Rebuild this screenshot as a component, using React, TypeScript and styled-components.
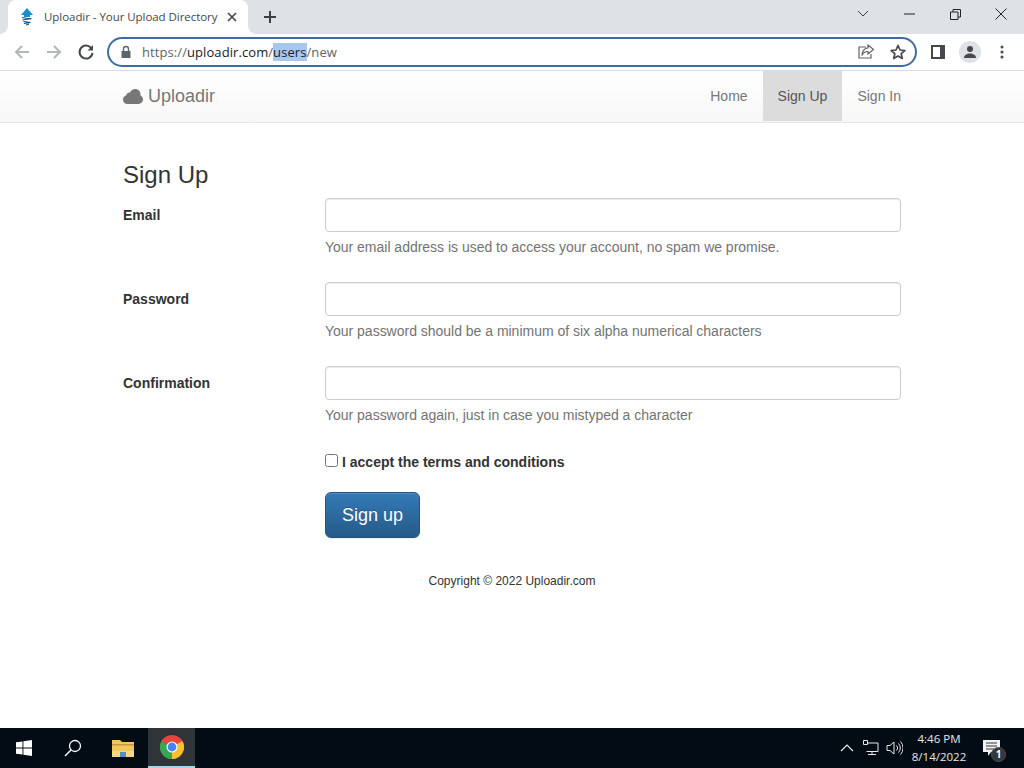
import React from "react";
import styled, { createGlobalStyle } from "styled-components";

const Global = createGlobalStyle`
  html, body { margin: 0; padding: 0; height: 100%; }
  body { font-family: "Liberation Sans", Arial, sans-serif; background: #fff; color: #333; overflow: hidden; }
  * { box-sizing: border-box; }
`;

const Page = styled.div`
  width: 1024px; height: 768px; display: flex; flex-direction: column; overflow: hidden;
`;
const TabStrip = styled.div`
  height: 34px; background: #dee1e6; display: flex; align-items: flex-end; flex: none;
`;
const Tab = styled.div`
  position: relative; width: 240px; height: 34px; margin-left: 8px; background: #fff; border-radius: 8px 8px 0 0;
  display: flex; align-items: center; padding: 0 0 0 11px; gap: 9px;
  &::before, &::after { content: ""; position: absolute; bottom: 0; width: 8px; height: 8px; }
  &::before { left: -8px; background: radial-gradient(circle at 0 0, #dee1e6 7.5px, #fff 8px); }
  &::after { right: -8px; background: radial-gradient(circle at 100% 0, #dee1e6 7.5px, #fff 8px); }
`;
const TabTitle = styled.span`
  font-family: "Open Sans", sans-serif; font-size: 11.5px; color: #45484c; white-space: nowrap; flex: 1;
  letter-spacing: -0.05px; padding-bottom: 1px;
`;
const TabClose = styled.svg`
  width: 10px; height: 10px; margin-right: 11px; flex: none;
`;
const NewTab = styled.svg`
  width: 14px; height: 14px; margin-left: 15px; margin-bottom: 10px; flex: none;
`;
const WindowControls = styled.div`
  margin-left: auto; height: 34px; display: flex; align-items: center;
`;
const WinButton = styled.div<{ $w: number }>`
  width: ${p => p.$w}px; height: 34px; display: flex; align-items: center; justify-content: center;
  padding-bottom: 6px;
`;
const Toolbar = styled.div`
  height: 37px; background: #fff; border-bottom: 1px solid #dadce0; display: flex; align-items: center;
  padding: 0 0 1px 13px; flex: none;
`;
const NavIcon = styled.svg<{ $mr: number }>`
  width: 18px; height: 18px; flex: none; margin-right: ${p => p.$mr}px;
`;
const Omnibox = styled.div`
  width: 810px; height: 30px; border: 2px solid #3f6d9d; border-radius: 15px; display: flex; align-items: center;
  padding: 0 8px 0 11px; flex: none; margin-right: 14px; margin-left: 2px;
`;
const UrlText = styled.div`
  font-family: "Open Sans", sans-serif; font-size: 13px; color: #5f6368; margin-left: 10px; flex: 1; white-space: nowrap;
  letter-spacing: 0.08px;
`;
const UrlHost = styled.span` color: #202124; `;
const UrlSelected = styled.span` background: #a8c7f0; color: #202124; `;
const OmniIcon = styled.svg`
  width: 18px; height: 18px; flex: none; margin-left: 14px;
`;
const Avatar = styled.div`
  width: 22px; height: 22px; border-radius: 50%; background: #dee1e6; margin: 0 19px 0 14px; display: flex;
  align-items: center; justify-content: center; flex: none;
`;

const Navbar = styled.nav`
  height: 52px; flex: none; background: linear-gradient(to bottom, #fff 0%, #f7f7f7 100%);
  border-bottom: 1px solid #e7e7e7; display: flex; justify-content: space-between; padding: 0 108px 0 123px;
`;
const Brand = styled.div`
  display: flex; align-items: center; gap: 5px; font-size: 18px; color: #777;
`;
const NavLinks = styled.div` display: flex; height: 50px; `;
const NavLink = styled.div<{ $active?: boolean }>`
  padding: 0 15px 1px; display: flex; align-items: center; font-size: 14px;
  color: ${p => (p.$active ? "#555" : "#777")};
  background: ${p => (p.$active ? "#dcdcdc" : "transparent")};
`;

const Main = styled.main`
  flex: 1; padding: 35px 123px 0; display: flex; flex-direction: column;
`;
const Heading = styled.h1`
  font-size: 24px; font-weight: 400; line-height: 33px; margin: 0 0 7px; color: #333;
`;
const Row = styled.div`
  display: grid; grid-template-columns: 202px 576px; height: 84px;
`;
const Label = styled.label`
  font-size: 14px; font-weight: 700; color: #333; padding-top: 9px; line-height: 17px;
`;
const InputBox = styled.input`
  display: block; width: 100%; height: 34px; border: 1px solid #ccc; border-radius: 4px; background: #fff;
  box-shadow: inset 0 1px 1px rgba(0,0,0,.075); outline: none;
`;
const Help = styled.div`
  font-size: 14px; line-height: 20px; color: #737373; margin-top: 5px; letter-spacing: -0.015px;
`;
const Actions = styled.div`
  margin-left: 202px; margin-top: 2px; display: flex; flex-direction: column; align-items: flex-start;
`;
const CheckLine = styled.label`
  display: flex; align-items: center; height: 20px; font-size: 14px; font-weight: 700; color: #333; gap: 4px; margin-bottom: 20px;
`;
const Check = styled.span`
  width: 13px; height: 13px; border: 1px solid #767676; border-radius: 2.5px; background: #fff; display: block; margin-bottom: 4px;
`;
const Submit = styled.button`
  width: 95px; height: 46px; border: 1px solid #245580; border-radius: 6px; font-family: inherit; font-size: 18px; color: #fff;
  background: linear-gradient(to bottom, #337ab7 0%, #265a88 100%);
  text-shadow: 0 -1px 0 rgba(0,0,0,.2); box-shadow: inset 0 1px 0 rgba(255,255,255,.15), 0 1px 1px rgba(0,0,0,.075);
`;
const Footer = styled.div`
  font-size: 12px; color: #333; text-align: center; margin: 36px 0 0 -6px; line-height: 14px; width: 790px;
`;

const Taskbar = styled.div`
  height: 40px; background: #030c14; display: flex; align-items: stretch; flex: none; color: #fff;
`;
const TaskSlot = styled.div<{ $w: number; $active?: boolean }>`
  width: ${p => p.$w}px; display: flex; align-items: center; justify-content: center; flex: none;
  background: ${p => (p.$active ? "#2e3438" : "transparent")};
  border-bottom: ${p => (p.$active ? "2px solid #9fd8e6" : "none")};
`;
const Tray = styled.div` margin-left: auto; display: flex; align-items: center; `;
const Clock = styled.div`
  width: 70px; margin-left: 1px; text-align: center; font-family: "Open Sans", sans-serif; font-size: 11.5px; line-height: 18px; color: #e8e8e8;
`;
const Notify = styled.div`
  position: relative; width: 50px; height: 40px; display: flex; align-items: center; padding-left: 9px;
`;
const Badge = styled.span`
  position: absolute; left: 17px; top: 19px; width: 15px; height: 15px; border-radius: 50%; background: #33373a;
  border: 1px solid #4a4d50; color: #fff; font-family: "Open Sans", sans-serif; font-size: 10px; font-weight: 700; line-height: 13px; text-align: center;
`;

const Favicon = () => (
  <svg width="16" height="18" viewBox="0 0 16 18" style={{ flex: "none" }}>
    <path d="M8 0 L14 7 L11 7 L11 9 L5 9 L5 7 L2 7 Z" fill="#1c8fc9" />
    <path d="M3 9.500l9 1.500M3.500 12l9-1.500M4.500 13.500l7 1M5 15.500l6-1M7 17l3-1" stroke="#0f4f78" strokeWidth="1.100" fill="none" />
  </svg>
);

const Cloud = () => (
  <svg width="20" height="15" viewBox="0 0 20 15">
    <path d="M4.500 15C2 15 0 13.100 0 10.700c0-1.900 1.200-3.500 3-4.100C3.300 4.600 5 3.200 7 3.400 8 1.400 10 0 12.200 0c2.900 0 5.200 2.200 5.300 5 .1.500.1 1 0 1.400 1.500.7 2.500 2.200 2.500 3.900C20 12.900 17.900 15 15.300 15Z" fill="#777" />
  </svg>
);

const Chrome = () => (
  <svg width="24" height="24" viewBox="0 0 24 24">
    <circle cx="12" cy="12" r="12" fill="#e8453c" />
    <path d="M12 12 L22.400 6 A12 12 0 0 1 12 24 Z" fill="#fbc02d" />
    <path d="M12 12 L12 24 A12 12 0 0 1 1.600 6 Z" fill="#34a853" />
    <path d="M12 12 L1.600 6 A12 12 0 0 1 5 2.300 L12 7Z" fill="#e8453c" />
    <circle cx="12" cy="12" r="5.500" fill="#fff" />
    <circle cx="12" cy="12" r="4.400" fill="#4285f4" />
  </svg>
);

export default function App() {
  return (
    <Page>
      <Global />
      <TabStrip>
        <Tab>
          <Favicon />
          <TabTitle>Uploadir - Your Upload Directory</TabTitle>
          <TabClose viewBox="0 0 10 10"><path d="M1 1l8 8M9 1l-8 8" stroke="#45484c" strokeWidth="1.700" /></TabClose>
        </Tab>
        <NewTab viewBox="0 0 14 14"><path d="M7 1v12M1 7h12" stroke="#3c4043" strokeWidth="2" /></NewTab>
        <WindowControls>
          <WinButton $w={46}><svg width="12" height="8" viewBox="0 0 12 8"><path d="M1 1l5 5 5-5" fill="none" stroke="#3c4043" /></svg></WinButton>
          <WinButton $w={46}><svg width="11" height="2" viewBox="0 0 11 2"><path d="M0 1h11" stroke="#222" /></svg></WinButton>
          <WinButton $w={46}><svg width="11" height="11" viewBox="0 0 11 11"><path d="M.5 3h7.500v7.500H.5zM3 3V.5h7.500V8H8" fill="none" stroke="#222" /></svg></WinButton>
          <WinButton $w={46}><svg width="12" height="12" viewBox="0 0 12 12"><path d="M.5.5l11 11M11.500.5l-11 11" stroke="#222" /></svg></WinButton>
        </WindowControls>
      </TabStrip>
      <Toolbar>
        <NavIcon $mr={14} viewBox="0 0 18 18"><path d="M16 9H3M9 3L3 9l6 6" fill="none" stroke="#b4b7bb" strokeWidth="2" /></NavIcon>
        <NavIcon $mr={14} viewBox="0 0 18 18"><path d="M2 9h13M9 3l6 6-6 6" fill="none" stroke="#b4b7bb" strokeWidth="2" /></NavIcon>
        <NavIcon $mr={10} viewBox="0 0 18 18"><path d="M14.800 6A6.500 6.500 0 1 0 15.500 10" fill="none" stroke="#45484c" strokeWidth="2" /><path d="M16 2v5.500h-5.500z" fill="#45484c" /></NavIcon>
        <Omnibox>
          <svg width="12" height="14" viewBox="0 0 12 14" style={{ flex: "none" }}>
            <path d="M1.500 6h9v7h-9z" fill="#5f6368" />
            <path d="M3.500 6V4a2.500 2.500 0 0 1 5 0v2" fill="none" stroke="#5f6368" strokeWidth="1.400" />
          </svg>
          <UrlText>https://<UrlHost>uploadir.com</UrlHost>/<UrlSelected>users</UrlSelected>/new</UrlText>
          <OmniIcon viewBox="0 0 18 18">
            <path d="M9 4H2v11h12v-4" fill="none" stroke="#5f6368" strokeWidth="1.200" />
            <path d="M11 2l5.500 4.500L11 11V8.500C8 8.500 6 10 5 12.500 5 8.500 7.500 5 11 4.800Z" fill="none" stroke="#5f6368" strokeWidth="1.200" />
          </OmniIcon>
          <OmniIcon viewBox="0 0 18 18">
            <path d="M9 2.500l2 4.500 4.900.500-3.700 3.200 1.100 4.800L9 13l-4.300 2.500 1.100-4.800L2.100 7.500 7 7Z" fill="none" stroke="#45484c" strokeWidth="1.700" strokeLinejoin="round" />
          </OmniIcon>
        </Omnibox>
        <svg width="14" height="14" viewBox="0 0 14 14" style={{ flex: "none" }}>
          <path d="M0 0h14v14H0z" fill="#45484c" />
          <path d="M2 2h7v10H2z" fill="#fff" />
        </svg>
        <Avatar>
          <svg width="14" height="14" viewBox="0 0 14 14">
            <circle cx="7" cy="4" r="3" fill="#45484c" />
            <path d="M1 13c0-3 3-4.500 6-4.500s6 1.500 6 4.500z" fill="#45484c" />
          </svg>
        </Avatar>
        <svg width="4" height="14" viewBox="0 0 4 14" style={{ flex: "none" }}>
          <circle cx="2" cy="2" r="1.500" fill="#45484c" />
          <circle cx="2" cy="7" r="1.500" fill="#45484c" />
          <circle cx="2" cy="12" r="1.500" fill="#45484c" />
        </svg>
      </Toolbar>
      <Navbar>
        <Brand><Cloud />Uploadir</Brand>
        <NavLinks>
          <NavLink>Home</NavLink>
          <NavLink $active>Sign Up</NavLink>
          <NavLink>Sign In</NavLink>
        </NavLinks>
      </Navbar>
      <Main>
        <Heading>Sign Up</Heading>
        <Row>
          <Label>Email</Label>
          <div>
            <InputBox />
            <Help>Your email address is used to access your account, no spam we promise.</Help>
          </div>
        </Row>
        <Row>
          <Label>Password</Label>
          <div>
            <InputBox type="password" />
            <Help>Your password should be a minimum of six alpha numerical characters</Help>
          </div>
        </Row>
        <Row>
          <Label>Confirmation</Label>
          <div>
            <InputBox type="password" />
            <Help>Your password again, just in case you mistyped a character</Help>
          </div>
        </Row>
        <Actions>
          <CheckLine><Check />I accept the terms and conditions</CheckLine>
          <Submit>Sign up</Submit>
        </Actions>
        <Footer>Copyright © 2022 Uploadir.com</Footer>
      </Main>
      <Taskbar>
        <TaskSlot $w={48}>
          <svg width="16" height="16" viewBox="0 0 16 16">
            <path d="M0 2.300l6.500-.9v6.200H0zM7.400 1.300L16 0v7.600H7.400zM0 8.400h6.500v6.200L0 13.700zM7.400 8.400H16V16l-8.600-1.300z" fill="#fff" />
          </svg>
        </TaskSlot>
        <TaskSlot $w={50}>
          <svg width="18" height="18" viewBox="0 0 18 18">
            <circle cx="11" cy="7" r="5.500" fill="none" stroke="#fff" strokeWidth="1.300" />
            <path d="M7 11l-6 6" stroke="#fff" strokeWidth="1.500" />
          </svg>
        </TaskSlot>
        <TaskSlot $w={50}>
          <svg width="22" height="18" viewBox="0 0 22 18">
            <path d="M0 1h8l2 2h12v15H0z" fill="#f0c75e" />
            <path d="M0 5h22v1.500H0z" fill="#c9983a" />
            <path d="M0 12h22v6H0z" fill="#f5d97f" />
            <path d="M8 13h6v5H8z" fill="#4f8fc4" />
          </svg>
        </TaskSlot>
        <TaskSlot $w={47} $active><Chrome /></TaskSlot>
        <Tray>
          <svg width="14" height="8" viewBox="0 0 14 8" style={{ marginRight: 9 }}><path d="M1 7l6-6 6 6" fill="none" stroke="#e8e8e8" strokeWidth="1.200" /></svg>
          <svg width="16" height="16" viewBox="0 0 16 16" style={{ marginRight: 7 }}>
            <path d="M3.500 3H15v8.500H3.500M9 11.500v3M5 14.500h8" fill="none" stroke="#e8e8e8" />
            <path d="M.5.500h4v4h-4z" fill="#030c14" stroke="#e8e8e8" />
          </svg>
          <svg width="17" height="16" viewBox="0 0 17 16">
            <path d="M1 5.500h3L8 2v12L4 10.500H1z" fill="none" stroke="#e8e8e8" />
            <path d="M10.500 5.500a3.500 3.500 0 0 1 0 5M12.500 3.500a6.500 6.500 0 0 1 0 9M14.500 1.500a9.500 9.500 0 0 1 0 13" fill="none" stroke="#e8e8e8" />
          </svg>
          <Clock>4:46 PM<br />8/14/2022</Clock>
          <Notify>
            <svg width="17" height="16" viewBox="0 0 17 16">
              <path d="M0 0h17v12H8l-3 4v-4H0z" fill="#f2f2f2" />
              <path d="M3 3h11M3 6h11M3 9h8" stroke="#33373a" />
            </svg>
            <Badge>1</Badge>
          </Notify>
        </Tray>
      </Taskbar>
    </Page>
  );
}
